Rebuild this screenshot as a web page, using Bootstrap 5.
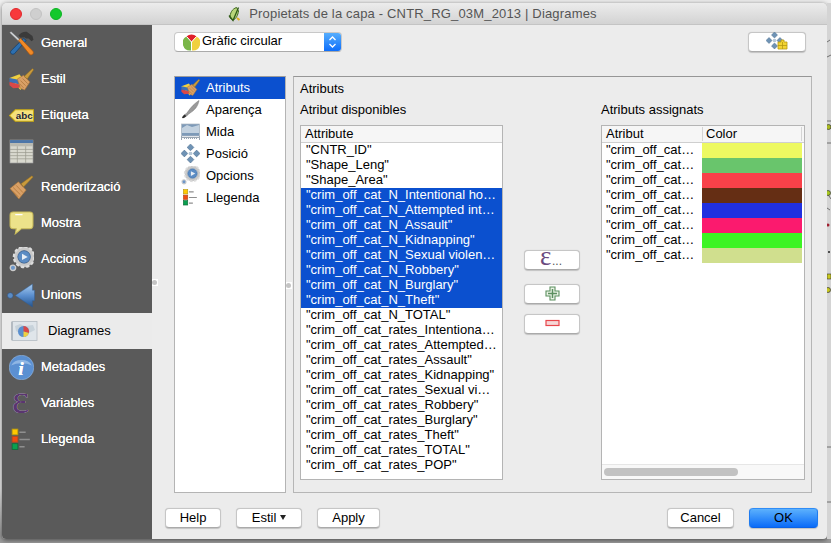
<!DOCTYPE html>
<html lang="ca">
<head>
<meta charset="utf-8">
<title>Propietats de la capa</title>
<link href="https://cdn.jsdelivr.net/npm/bootstrap@5.3.0/dist/css/bootstrap.min.css" rel="stylesheet">
<style>
html,body{margin:0;width:831px;height:543px;overflow:hidden;background:#f2f2f2}
body{font:13px/15px "Liberation Sans",Arial,sans-serif;color:#000}
.desk{width:831px;height:543px;padding:3px 0 4px 2px;background:linear-gradient(#efefef 0,#efefef 90%,#9c9c9c 98.8%)}
.win{width:825px;height:536px;border-radius:5px 5px 4px 4px;overflow:hidden;background:#ececec;box-shadow:0 1px 5px rgba(0,0,0,.55);flex:none}
.mapstrip{width:4px;height:536px;flex:none;background:#d4d4d4}
.tbar{height:22px;background:linear-gradient(#ececec,#d3d3d3);border-bottom:1px solid #c4c4c4;color:#555;position:relative;font-size:13px;letter-spacing:.17px;padding-right:5px}
.lights{position:absolute;left:8px;top:5px;gap:8px}
.lights i{display:block;width:12px;height:12px;border-radius:50%}
.lr{background:#f8393c;border:1px solid #e0282b}.ly{background:#cfcfcf;border:1px solid #c2c2c2}.lg{background:#14c82c;border:1px solid #0cb423}
.side{width:150px;background:#5a5a5a;flex:none}
.sitem{height:36px;padding-left:7px;color:#fff;gap:7px;text-shadow:0 0 .6px #fff}
.sitem svg{width:25px;height:25px;flex:none;overflow:visible}
.sitem span{padding-bottom:2px}
.sitem.on{background:#ebebeb;color:#000;text-shadow:none;padding-left:9px;gap:10px}
.sitem.on svg{width:27px;height:27px}
.pane{padding-top:7px}
.toprow{height:20px;margin:0 21px 24px 22px}
.combo{width:168px;height:20px;background:#fff;border:1px solid #c8c8c8;border-bottom-color:#aaa;border-radius:4px;overflow:hidden}
.combo svg.ci{width:17px;height:18px;margin:0 2px 0 8px;flex:none}
.combo span{padding-bottom:3px}
.comboarrow{width:17px;height:100%;margin-left:auto;background:linear-gradient(#56aefd,#0d6efb)}
.mapbtn{width:58px;height:20px}
.qb.btn{--bs-btn-padding-x:0;--bs-btn-padding-y:0;--bs-btn-font-size:13px;--bs-btn-line-height:17px;--bs-btn-border-radius:4px;--bs-btn-color:#000;--bs-btn-bg:#fff;--bs-btn-border-color:#c6c6c6;--bs-btn-hover-bg:#fff;--bs-btn-hover-color:#000;--bs-btn-hover-border-color:#c6c6c6;height:20px;border-bottom-color:#aaa;box-shadow:0 .5px 1px rgba(0,0,0,.18);display:flex;align-items:center;justify-content:center;padding-bottom:2px}
.qb.okb.btn{--bs-btn-bg:#2a8cfd;--bs-btn-hover-bg:#2a8cfd;--bs-btn-border-color:#1e7bf0;--bs-btn-hover-border-color:#1e7bf0;background:linear-gradient(#5cb1fd,#0a6bf8);border-color:#2f8cf6 #1e7bf0 #0a62e6}
.mid{height:417px;margin:0 15px 15px 22px;gap:7px;position:relative}
.pagelist{width:112px;height:417px;background:#fff;border:1px solid #b4b4b4;border-top-color:#9c9c9c;flex:none;padding:0;border-radius:0}
.pagelist .list-group-item{height:22px;padding:0 0 2px 6px;border:0;border-radius:0;background:transparent;color:#000;display:flex;align-items:center;gap:6px;font-size:13px;line-height:15px}
.pagelist .list-group-item svg{width:19px;height:19px;flex:none}
.pagelist .list-group-item.active{background:#0b50cf;color:#fff}
.grp{width:519px;height:417px;border:1px solid #b6b6b6;border-top-color:#969696;padding:4px 6px 0 6px;flex:none}
.lbl{height:15px;line-height:15px}
.lb1{margin-bottom:6px}
.lb2{margin-bottom:8px}
.tbl{height:355px;width:203px;background:#fff;border:1px solid #b4b4b4;flex:none;overflow:hidden;position:relative}
.tbl.rt{width:204px}
.thead{height:17px;background:#f6f6f6;border-bottom:1px solid #cfcfcf;padding-left:4px;line-height:16px;white-space:nowrap}
.trow{height:15px;line-height:13px;padding-left:5px;white-space:nowrap;overflow:hidden}
.trow.sel{background:#0b50cf;color:#fff}
.cmid{width:98px;flex:none;padding:148px 21px 0 21px;gap:14px}
.cmid .qb.btn{width:56px;flex:none;margin:0}
.cmid .qb.btn+.qb.btn+.qb.btn{margin-top:-4px}
.rr{height:15px;line-height:13px;white-space:nowrap;width:201px}
.rr span{display:block;width:100px;padding-left:4px;overflow:hidden}
.rr b{display:block;width:100px;height:15px}
.hcol{width:100px;padding-left:4px}
.hcol+.hcol{border-left:1px solid #d4d4d4;border-right:1px solid #d4d4d4;padding-left:3px;height:14px;line-height:13px;margin-top:1px}
.rt .thead{padding-left:0}
.c1{background:#edf961}.c2{background:#69c56c}.c3{background:#f94149}.c4{background:#652e14}.c5{background:#2030e0}.c6{background:#fb1a6e}.c7{background:#3df424}.c8{background:#d0df8e}
.hsb{position:absolute;left:0;right:0;bottom:0;height:15px;background:#f8f8f8;border-top:1px solid #e6e6e6}
.hsb i{position:absolute;left:2px;top:3px;width:134px;height:8px;border-radius:4px;background:#c2c2c2}
.foot{height:20px;margin:0 9px 11px 13px;gap:15px}
.w56{width:56px}.w66{width:66px}.w63{width:63px}.w67{width:67px}.w69{width:69px}
.handle{position:absolute;width:6px;height:7px;background:#fff}
.handle::after{content:"";position:absolute;left:0;top:1px;width:5px;height:5px;border-radius:50%;background:#c4c4c4}
.h1{left:-22px;top:203px}
.h2{left:112px;top:206px}
.caret{display:inline-block;width:0;height:0;border-left:3.5px solid transparent;border-right:3.5px solid transparent;border-top:5px solid #222;margin-left:4px;vertical-align:-.5px}
</style>
</head>
<body>
<svg width="0" height="0" class="position-absolute">
<defs>
<linearGradient id="gu" x1="0" y1="0" x2="0" y2="1"><stop offset="0" stop-color="#a9cdf0"/><stop offset=".5" stop-color="#5b8fcf"/><stop offset="1" stop-color="#24558f"/></linearGradient>
<symbol id="i-gen" viewBox="0 0 24 24">
<path d="M.6 1.600 2 .4 14 11.500l-1.400 1.400z" fill="#cfd3d6" stroke="#666" stroke-width=".4"/>
<path d="M9 4.500C11 2 14 .4 17 .8l5.500 4 1 3.500-1.800 1.600-3-2.600-2.200-.2-1.800-1.200-3.600.6z" fill="#3a3a3a"/>
<path d="M14 7 16.500 9 5.500 21.500c-1 1-2.500 1.200-3.400.3-1-1-.8-2.200.2-3.200z" fill="#2d6fb0" stroke="#143c66" stroke-width=".7"/>
<path d="M9 9 11 7l12 12.500c.6.6.6 2-.2 2.800-.8.8-2.200 1-2.900.3z" fill="#f08a28" stroke="#a85610" stroke-width=".7"/>
</symbol>
<symbol id="i-sty" viewBox="0 0 24 24">
<path d="M.5 10.500 10 7l6 8-5 7z" fill="#f0d040"/><path d="M.5 10.500 8 12l3 5-10.500-2.500z" fill="#3e6fb5"/><path d="M.5 14.500 11 17l-1 3-6 .5-3.500-3z" fill="#d94848"/>
<path d="M8 11.500 14 8l6 6.500L15 22l-4-1.500z" fill="#d9a066" stroke="#a97336" stroke-width=".6"/>
<path d="M14.500 9 22.500 1.500l1.200 1.200L17.500 11.500z" fill="#c99a3c" stroke="#8e6a20" stroke-width=".5"/>
<path d="M11 13l5 5M10 16l4 4M13 11l5 5" stroke="#a97336" stroke-width=".7"/>
</symbol>
<symbol id="i-abc" viewBox="0 0 24 24">
<path d="M.5 12 6 6.500h17.500v11H6z" fill="#f6e27a" stroke="#c7a812" stroke-width="1"/>
<text x="14.600" y="15.500" text-anchor="middle" font-family="Liberation Sans,sans-serif" font-size="9.500" fill="#222" font-weight="700">abc</text>
</symbol>
<symbol id="i-tab" viewBox="0 0 24 24">
<rect x="1" y="1" width="22" height="22" fill="#d9d9cf" stroke="#aaa" stroke-width=".6"/><rect x="1" y="1" width="22" height="3" fill="#4d76a8"/><rect x="1" y="4" width="22" height="3" fill="#b9b9b0"/>
<path d="M1 10h22M1 13h22M1 16h22M1 19h22M8 7v16M16 7v16" stroke="#9a9a90" stroke-width=".7"/>
</symbol>
<symbol id="i-ren" viewBox="0 0 24 24">
<path d="M1 13 9 6.500l7.500 8L9.500 23z" fill="#d9a066" stroke="#a97336" stroke-width=".6"/>
<path d="M11.500 8.500 22 .8l1.200 1.200L14 11.500z" fill="#c99a3c" stroke="#8e6a20" stroke-width=".5"/>
<path d="M4 12l7 7M7 10l6.500 7M3 15l6 6" stroke="#a97336" stroke-width=".7"/>
</symbol>
<symbol id="i-bub" viewBox="0 0 24 24">
<path d="M4 1h16c2 0 3 1 3 3v10c0 2-1 3-3 3H12L6 22l1-5H4c-2 0-3-1-3-3V4c0-2 1-3 3-3z" fill="#ece28a" stroke="#c9bb5a"/>
<path d="M6 3.500h7" stroke="#fff" stroke-width="1.200" fill="none"/>
</symbol>
<symbol id="i-act" viewBox="0 0 24 24">
<circle cx="14.500" cy="9.500" r="8" fill="none" stroke="#c8c8c8" stroke-width="3.800"/>
<circle cx="14.500" cy="9.500" r="9.800" fill="none" stroke="#dcdcdc" stroke-width="2.200" stroke-dasharray="3 2.100"/>
<circle cx="14.500" cy="9.500" r="6" fill="#5b8cc4" stroke="#39659a" stroke-width=".6"/>
<path d="M12.500 6.500 18 9.500l-5.500 3z" fill="#e8eef6"/>
<circle cx="3.800" cy="20" r="2.600" fill="#6d97c9" stroke="#ccc" stroke-width="1.300"/>
</symbol>
<symbol id="i-uni" viewBox="0 0 24 24" overflow="visible">
<path d="M6 12 22.500 1v6l2 0v10l-2 0v6z" fill="url(#gu)" stroke="#2c5c98" stroke-width=".4"/>
<circle cx="1.200" cy="12" r="2.700" fill="#5b8cc4" stroke="#2a4e80" stroke-width=".5"/>
</symbol>
<symbol id="i-dia" viewBox="0 0 27 27">
<rect x="1" y="3.500" width="25" height="19" fill="#dfe5ea" stroke="#b4bbc2" stroke-width=".8"/>
<path d="M1 4v18" stroke="#b4bbc2" stroke-width="2"/>
<path d="M4 8l5-2 5 2 8-1 2 5-6 3-8 1-5-3z" fill="#c7d2da"/>
<circle cx="12.500" cy="13.500" r="5.500" fill="#5a8fcf"/><path d="M12.500 13.500V8a5.500 5.500 0 0 1 5.300 7z" fill="#d94848"/><path d="M12.500 13.500l5.300 1.500a5.500 5.500 0 0 1-5.300 4z" fill="#f0d040"/>
</symbol>
<symbol id="i-inf" viewBox="0 0 24 24">
<circle cx="12" cy="12" r="11.800" fill="#5b90d2" stroke="#9fc0e6" stroke-width=".5"/>
<path d="M2 10a11 9 0 0 1 20 0 16 9 0 0 0-20 0z" fill="#8fb6e4"/>
<text x="11.500" y="19" text-anchor="middle" font-family="Liberation Serif,serif" font-size="19" font-style="italic" font-weight="700" fill="#fff">i</text>
</symbol>
<symbol id="i-var" viewBox="0 0 24 24" overflow="visible">
<text x="11" y="21" text-anchor="middle" font-family="Liberation Serif,serif" font-size="40" fill="#5a3570">ε</text>
</symbol>
<symbol id="i-leg" viewBox="0 0 24 24">
<rect x="3" y="2" width="5.500" height="5.500" fill="#ffc800" stroke="#b89a10" stroke-width=".8"/><rect x="3" y="9" width="5.500" height="5.500" fill="#f04a10" stroke="#b04a20" stroke-width=".8"/><rect x="3" y="16" width="5.500" height="5.500" fill="#0aa050" stroke="#106b38" stroke-width=".8"/>
<path d="M10 5h6M10 12h10M10 19h5" stroke="#8f8f8f" stroke-width="1.500"/>
</symbol>
<symbol id="i-pos" viewBox="0 0 18 18">
<path d="M9 0l3.200 3.200L9 6.400 5.800 3.200zM9 11.600l3.200 3.200L9 18l-3.200-3.200zM3.200 5.800l3.200 3.200-3.200 3.200L0 9zM14.800 5.800 18 9l-3.200 3.200L11.600 9z" fill="#6f93b5" stroke="#47688a" stroke-width=".5"/>
<path d="M7.500 7.500h3v3h-3z" fill="#b8c9d8"/>
</symbol>
<symbol id="i-mid" viewBox="0 0 19 19">
<rect x=".5" y="2" width="18" height="12" fill="#7d9ab8" stroke="#aeb8c2" stroke-width=".7"/><path d="M1 6l5-3 5 2 7-2v8H1z" fill="#dfe8f0" opacity=".7"/>
<path d="M.5 15.500h18M.5 14v4M18.500 14v4" stroke="#9aa6b2"/><path d="M3 16.500h13" stroke="#9aa6b2" stroke-dasharray="1 1"/>
</symbol>
<symbol id="i-apa" viewBox="0 0 19 19">
<path d="M18 .5C17 6 14 10 9 13c-2 1.500-3 2.500-3.500 3L3 15c1.500-.5 3-2 4-3.500C10 7 14 3 18 .5z" fill="#9a9a9a" stroke="#6e6e6e" stroke-width=".5"/>
<path d="M1 18c.3-1.500 1.200-2.800 2.500-3.200L5.500 16C4.500 17.500 2.500 18.500 1 18z" fill="#2e2e2e"/>
</symbol>
</defs>
</svg>

<div class="desk d-flex">
<div class="win d-flex flex-column">
  <div class="tbar d-flex align-items-center justify-content-center">
    <div class="lights d-flex"><i class="lr"></i><i class="ly"></i><i class="lg"></i></div>
    <svg width="14" height="16" viewBox="0 0 14 16" class="me-2"><path d="M9.500 1.500C5 3 3 7 3 12l3 2c3-1 5-5 5.500-9z" fill="#b9d67a" stroke="#3f6a20" stroke-width="1"/><path d="M2 9.500l4 5 5.500-13" fill="none" stroke="#2f5a18" stroke-width="1.300"/><path d="M10 12l2.500 2" stroke="#e0b020" stroke-width="2"/></svg>
    <span>Propietats de la capa - CNTR_RG_03M_2013 | Diagrames</span>
  </div>
  <div class="d-flex flex-grow-1">
    <div class="side d-flex flex-column">
      <div class="sitem d-flex align-items-center"><svg><use href="#i-gen"/></svg><span>General</span></div>
      <div class="sitem d-flex align-items-center"><svg><use href="#i-sty"/></svg><span>Estil</span></div>
      <div class="sitem d-flex align-items-center"><svg><use href="#i-abc"/></svg><span>Etiqueta</span></div>
      <div class="sitem d-flex align-items-center"><svg><use href="#i-tab"/></svg><span>Camp</span></div>
      <div class="sitem d-flex align-items-center"><svg><use href="#i-ren"/></svg><span>Renderització</span></div>
      <div class="sitem d-flex align-items-center"><svg><use href="#i-bub"/></svg><span>Mostra</span></div>
      <div class="sitem d-flex align-items-center"><svg><use href="#i-act"/></svg><span>Accions</span></div>
      <div class="sitem d-flex align-items-center"><svg><use href="#i-uni"/></svg><span>Unions</span></div>
      <div class="sitem on d-flex align-items-center"><svg><use href="#i-dia"/></svg><span>Diagrames</span></div>
      <div class="sitem d-flex align-items-center"><svg><use href="#i-inf"/></svg><span>Metadades</span></div>
      <div class="sitem d-flex align-items-center"><svg><use href="#i-var"/></svg><span>Variables</span></div>
      <div class="sitem d-flex align-items-center"><svg><use href="#i-leg"/></svg><span>Llegenda</span></div>
    </div>
    <div class="pane flex-grow-1 d-flex flex-column">
      <div class="toprow d-flex justify-content-between">
        <div class="combo d-flex align-items-center">
          <svg class="ci" viewBox="0 0 17 18"><path d="M8.500 9 3.500 3.500a7.500 7.500 0 0 1 10 0z" fill="#e0202a"/><path d="M8.500 9l5-5.500A7.500 7.500 0 0 1 9 17.500z" fill="#f0d040"/><path d="M8.500 9 3.500 3.500A7.500 7.500 0 0 0 8 17.500z" fill="#7ab648"/><path d="M8.500 9V17.500M8.500 9 3.500 3.500M8.500 9l5-5.500" stroke="#fff" stroke-width="1"/></svg>
          <span>Gràfic circular</span>
          <div class="comboarrow d-flex align-items-center justify-content-center"><svg width="9" height="14" viewBox="0 0 9 14"><path d="M1.500 5 4.500 2l3 3M1.500 9l3 3 3-3" fill="none" stroke="#fff" stroke-width="1.300"/></svg></div>
        </div>
        <button type="button" class="btn qb mapbtn"><svg width="22" height="18" viewBox="0 0 22 18"><use href="#i-pos" width="17" height="17" x="0" y="0"/><path d="M12 10h3V8h3v2h3v7h-9z" fill="#f3d433" stroke="#b89a10" stroke-width=".8"/><path d="M12 13.500h9M16.500 10v7" stroke="#b89a10" stroke-width=".8"/></svg></button>
      </div>
      <div class="mid d-flex">
        <span class="handle h1"></span>
        <div class="list-group pagelist">
          <div class="list-group-item active"><svg><use href="#i-sty"/></svg>Atributs</div>
          <div class="list-group-item"><svg><use href="#i-apa"/></svg>Aparença</div>
          <div class="list-group-item"><svg><use href="#i-mid"/></svg>Mida</div>
          <div class="list-group-item"><svg><use href="#i-pos"/></svg>Posició</div>
          <div class="list-group-item"><svg><use href="#i-act"/></svg>Opcions</div>
          <div class="list-group-item"><svg><use href="#i-leg"/></svg>Llegenda</div>
        </div>
        <span class="handle h2"></span>
        <div class="grp">
          <div class="lbl lb1">Atributs</div>
          <div class="d-flex">
            <div>
              <div class="lbl lb2">Atribut disponibles</div>
              <div class="tbl">
                <div class="thead">Attribute</div>
                <div class="trow">"CNTR_ID"</div>
                <div class="trow">"Shape_Leng"</div>
                <div class="trow">"Shape_Area"</div>
                <div class="trow sel">"crim_off_cat_N_Intentional ho…</div>
                <div class="trow sel">"crim_off_cat_N_Attempted int…</div>
                <div class="trow sel">"crim_off_cat_N_Assault"</div>
                <div class="trow sel">"crim_off_cat_N_Kidnapping"</div>
                <div class="trow sel">"crim_off_cat_N_Sexual violen…</div>
                <div class="trow sel">"crim_off_cat_N_Robbery"</div>
                <div class="trow sel">"crim_off_cat_N_Burglary"</div>
                <div class="trow sel">"crim_off_cat_N_Theft"</div>
                <div class="trow">"crim_off_cat_N_TOTAL"</div>
                <div class="trow">"crim_off_cat_rates_Intentiona…</div>
                <div class="trow">"crim_off_cat_rates_Attempted…</div>
                <div class="trow">"crim_off_cat_rates_Assault"</div>
                <div class="trow">"crim_off_cat_rates_Kidnapping"</div>
                <div class="trow">"crim_off_cat_rates_Sexual vi…</div>
                <div class="trow">"crim_off_cat_rates_Robbery"</div>
                <div class="trow">"crim_off_cat_rates_Burglary"</div>
                <div class="trow">"crim_off_cat_rates_Theft"</div>
                <div class="trow">"crim_off_cat_rates_TOTAL"</div>
                <div class="trow">"crim_off_cat_rates_POP"</div>
              </div>
            </div>
            <div class="cmid d-flex flex-column">
              <button type="button" class="btn qb"><svg width="24" height="18" viewBox="0 0 24 18" overflow="visible"><text x="0" y="15" font-family="Liberation Serif,serif" font-size="27" fill="#6a4a80">ε</text><text x="12" y="15" font-family="Liberation Sans,sans-serif" font-size="12" fill="#555">...</text></svg></button>
              <button type="button" class="btn qb"><svg width="15" height="15" viewBox="0 0 15 15"><path d="M5 1h5v4h4v5h-4v4H5v-4H1V5h4z" fill="#eaf3e6" stroke="#5b8f5f" stroke-width="1.100"/><path d="M7.500 3v9M3 7.500h9" stroke="#5b8f5f" stroke-width="1.500"/></svg></button>
              <button type="button" class="btn qb"><svg width="15" height="8" viewBox="0 0 15 8"><rect x="1" y="1.500" width="13" height="5" fill="#f6d6d6" stroke="#e8474c" stroke-width="1.200"/></svg></button>
            </div>
            <div>
              <div class="lbl lb2">Atributs assignats</div>
              <div class="tbl rt">
                <div class="thead d-flex"><div class="hcol">Atribut</div><div class="hcol">Color</div></div>
                <div class="rr d-flex"><span>"crim_off_cat…</span><b class="c1"></b></div>
                <div class="rr d-flex"><span>"crim_off_cat…</span><b class="c2"></b></div>
                <div class="rr d-flex"><span>"crim_off_cat…</span><b class="c3"></b></div>
                <div class="rr d-flex"><span>"crim_off_cat…</span><b class="c4"></b></div>
                <div class="rr d-flex"><span>"crim_off_cat…</span><b class="c5"></b></div>
                <div class="rr d-flex"><span>"crim_off_cat…</span><b class="c6"></b></div>
                <div class="rr d-flex"><span>"crim_off_cat…</span><b class="c7"></b></div>
                <div class="rr d-flex"><span>"crim_off_cat…</span><b class="c8"></b></div>
                <div class="hsb"><i></i></div>
              </div>
            </div>
          </div>
        </div>
      </div>
      <div class="foot d-flex">
        <button type="button" class="btn qb w56">Help</button>
        <button type="button" class="btn qb w66">Estil<span class="caret"></span></button>
        <button type="button" class="btn qb w63">Apply</button>
        <button type="button" class="btn qb w67 ms-auto">Cancel</button>
        <button type="button" class="btn qb okb w69">OK</button>
      </div>
    </div>
  </div>
</div>
<svg class="mapstrip" viewBox="0 0 4 536"><path d="M0 39l3-2M0 54l4-2M0 118h4M0 140h4M0 190l4 6M0 205l3 2M0 444h4M0 499h4" stroke="#555" stroke-width=".8"/><circle cx="1.500" cy="124" r="2.500" fill="#a8b820" stroke="#333" stroke-width=".7"/><circle cx="1" cy="190" r="2.500" fill="#a8c820" stroke="#333" stroke-width=".7"/><circle cx="1" cy="222" r="1.500" fill="#a02030"/><circle cx="2" cy="249" r="1" fill="#222"/><rect x="0" y="271" width="4" height="5" fill="#c8c820" stroke="#333" stroke-width=".6"/><circle cx="1" cy="287" r="2.500" fill="#c8c820" stroke="#333" stroke-width=".7"/></svg>
</div>
</body>
</html>
